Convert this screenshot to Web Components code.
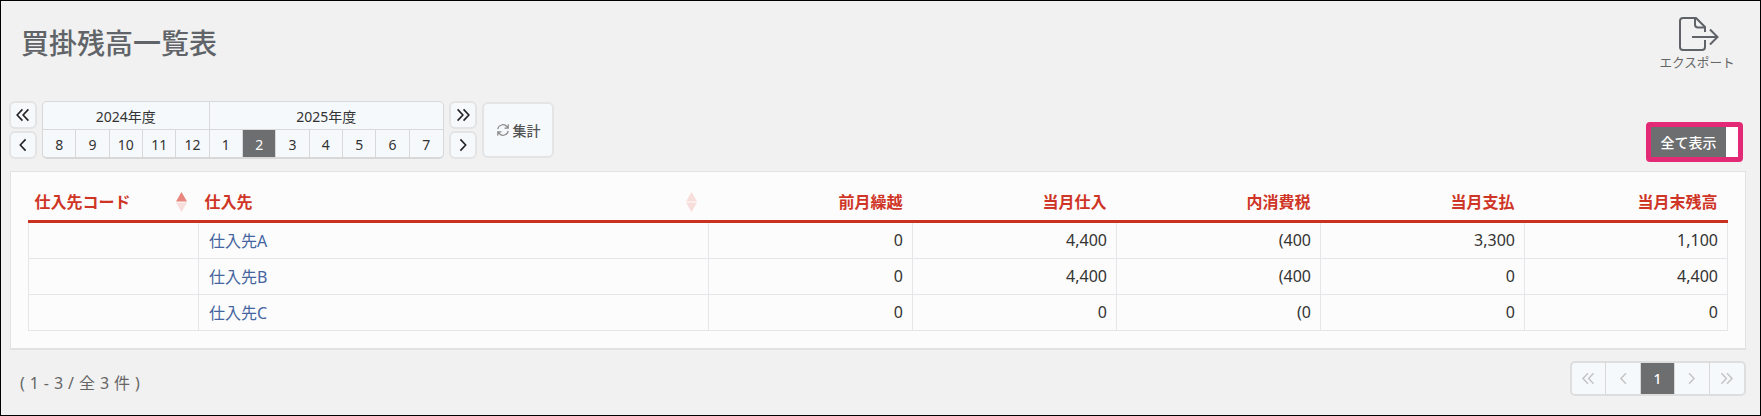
<!DOCTYPE html>
<html lang="ja">
<head>
<meta charset="utf-8">
<title>買掛残高一覧表</title>
<style>
  html, body { margin: 0; padding: 0; background: #f1f1f1; }
  body { font-family: "Noto Sans", "Noto Sans CJK JP", sans-serif; }
</style>
</head>
<body>
<ap-page>
  <ap-head slot="head" label="エクスポート">買掛残高一覧表</ap-head>
  <ap-calendar slot="calendar"></ap-calendar>
  <ap-show-all slot="action">全て表示</ap-show-all>
  <ap-balance-table slot="table"></ap-balance-table>
  <span slot="count">( 1 - 3 / 全 3 件 )</span>
  <ap-pager slot="pager"></ap-pager>
</ap-page>

<script>
(function () {
  const FONT = '"Noto Sans", "Noto Sans CJK JP", sans-serif';

  // shared chevrons, viewBox 0 0 16 16
  const ICONS = {
    first: '<path d="M7.5 3 2.8 8l4.7 5M12.8 3 8.1 8l4.7 5"/>',
    prev: '<path d="M10.3 3 5.6 8l4.7 5"/>',
    next: '<path d="M5.7 3l4.7 5-4.7 5"/>',
    last: '<path d="M3.2 3l4.7 5-4.7 5M8.5 3l4.7 5-4.7 5"/>'
  };

  function chevron(name, size, width) {
    return `<svg width="${size}" height="${size}" viewBox="0 0 16 16" fill="none" stroke="currentColor" stroke-width="${width}">${ICONS[name]}</svg>`;
  }

  class ApPage extends HTMLElement {
    constructor() {
      super();
      this.attachShadow({ mode: "open" });
      this.shadowRoot.innerHTML = `
        <style>
          :host {
            display: block;
            width: 1761px;
            height: 416px;
            box-sizing: border-box;
            border: 1px solid #000;
            background: #f1f1f1;
            overflow: hidden;
            font-family: ${FONT};
          }
          .tools {
            display: flex;
            justify-content: space-between;
            align-items: flex-end;
            padding: 0 17px 0 8px;
            margin-bottom: 12px;
          }
          .card {
            margin: 0 14px 0 9px;
            height: 179px;
            box-sizing: border-box;
            background: #fcfcfc;
            border: 1px solid #e2e2e2;
            border-bottom-width: 2px;
            padding: 14px 18px 0 17px;
          }
          .foot {
            display: flex;
            justify-content: space-between;
            align-items: flex-start;
            padding: 11px 14px 0 19px;
            font-size: 16px;
            color: #666;
          }
          ::slotted(span) {
            padding-top: 9px;
            letter-spacing: 0.4px;
          }
        </style>
        <slot name="head"></slot>
        <div class="tools">
          <slot name="calendar"></slot>
          <slot name="action"></slot>
        </div>
        <div class="card"><slot name="table"></slot></div>
        <div class="foot">
          <slot name="count"></slot>
          <slot name="pager"></slot>
        </div>
      `;
    }
  }

  class ApHead extends HTMLElement {
    constructor() {
      super();
      this.attachShadow({ mode: "open" });
      this.shadowRoot.innerHTML = `
        <style>
          :host {
            display: flex;
            justify-content: space-between;
            height: 100px;
            padding: 16px 24px 0 20px;
            box-sizing: border-box;
            color: #606468;
          }
          h1 {
            margin: 7px 0 0;
            font-size: 28px;
            line-height: 38px;
            font-weight: 500;
          }
          .export {
            display: flex;
            flex-direction: column;
            align-items: center;
            width: 78px;
            font-size: 12.6px;
            line-height: 18px;
            color: #666;
          }
          svg { display: block; margin: 0 0 3px 4px; }
        </style>
        <h1><slot></slot></h1>
        <div class="export">
          <svg width="40" height="34" viewBox="0 0 40 34" fill="none" stroke="#5f6368" stroke-width="2">
            <path d="M26 23v7a3 3 0 0 1-3 3H4a3 3 0 0 1-3-3V4a3 3 0 0 1 3-3h13l9 9v5"/>
            <path d="M16 1.500v6a3 3 0 0 0 3 3h7"/>
            <path d="M13 20h25M31 12.500 38.500 20 31 27.500"/>
          </svg>
          <span id="label"></span>
        </div>
      `;
    }

    connectedCallback() {
      this.shadowRoot.getElementById("label").textContent = this.getAttribute("label");
    }
  }

  class ApCalendar extends HTMLElement {
    constructor() {
      super();
      this.attachShadow({ mode: "open" });
      const months = [8, 9, 10, 11, 12, 1, 2, 3, 4, 5, 6, 7];
      const cells = months.map(m =>
        `<div class="m${m === 2 ? " on" : ""}">${m}</div>`).join("");
      this.shadowRoot.innerHTML = `
        <style>
          :host {
            display: flex;
            gap: 5px;
            font-size: 14px;
            color: #333;
          }
          .nav { display: grid; grid-template-rows: 28px 28px; gap: 2px; width: 28px; }
          button {
            padding: 0;
            margin: 0;
            font: inherit;
            color: #222;
            background: #f6f9fb;
            border: 2px solid #e4e4e4;
            border-radius: 6px;
            display: flex;
            align-items: center;
            justify-content: center;
          }
          .grid {
            width: 402px;
            height: 58px;
            box-sizing: border-box;
            display: grid;
            grid-template-columns: repeat(12, 1fr);
            grid-template-rows: 28px 28px;
            background: #f6f9fb;
            border: 1px solid #d8d8d8;
            border-bottom-width: 2px;
            border-radius: 5px;
            overflow: hidden;
          }
          .y, .m {
            display: flex;
            align-items: center;
            justify-content: center;
            box-sizing: border-box;
            border-right: 1px solid #d8d8d8;
          }
          .y { border-bottom: 1px solid #d8d8d8; }
          .y1 { grid-column: span 5; }
          .y2 { grid-column: span 7; border-right: 0; }
          .m:last-child { border-right: 0; }
          .m.on { background: #6c6e70; color: #fff; }
          .sum {
            width: 72px;
            height: 56px;
            margin-top: 1px;
            gap: 3px;
            font-weight: 500;
            color: #555;
          }
        </style>
        <div class="nav">
          <button>${chevron("first", 18, 1.4)}</button>
          <button>${chevron("prev", 18, 1.4)}</button>
        </div>
        <div class="grid">
          <div class="y y1">2024年度</div>
          <div class="y y2">2025年度</div>
          ${cells}
        </div>
        <div class="nav">
          <button>${chevron("last", 18, 1.4)}</button>
          <button>${chevron("next", 18, 1.4)}</button>
        </div>
        <button class="sum">
          <svg width="14" height="14" viewBox="0 0 16 16" fill="none" stroke="#8a8a8a" stroke-width="1.300">
            <path d="M2 7a6 6 0 0 1 10.400-3l1.600 1.800M14 1.500v4.300H9.700"/>
            <path d="M14 9a6 6 0 0 1-10.400 3L2 10.200M2 14.500v-4.300h4.300"/>
          </svg>
          集計
        </button>
      `;
    }
  }

  class ApShowAll extends HTMLElement {
    constructor() {
      super();
      this.attachShadow({ mode: "open" });
      this.shadowRoot.innerHTML = `
        <style>
          :host {
            display: flex;
            width: 97px;
            height: 40px;
            box-sizing: border-box;
            border: 5px solid #e32a77;
            border-radius: 4px;
            background: #fff;
            margin-bottom: -3px;
          }
          div {
            width: 75px;
            display: flex;
            align-items: center;
            justify-content: center;
            background: #6c6e70;
            color: #fff;
            font-size: 14px;
            font-weight: 500;
          }
        </style>
        <div><slot></slot></div>
      `;
    }
  }

  class ApBalanceTable extends HTMLElement {
    constructor() {
      super();
      this.attachShadow({ mode: "open" });
      const rows = [
        ["", "仕入先A", "0", "4,400", "(400", "3,300", "1,100"],
        ["", "仕入先B", "0", "4,400", "(400", "0", "4,400"],
        ["", "仕入先C", "0", "0", "(0", "0", "0"]
      ];
      const body = rows.map(r => "<tr>" + r.map((v, i) =>
        i === 1 ? `<td class="l"><a>${v}</a></td>` : `<td>${v}</td>`).join("") + "</tr>").join("");
      const sort = (up, down) => `
        <svg class="sort" width="11" height="20" viewBox="0 0 11 20">
          <path d="M5.500 0 11 9.500H0z" fill="${up}"/>
          <path d="M5.500 20 11 10.500H0z" fill="${down}"/>
        </svg>`;
      this.shadowRoot.innerHTML = `
        <style>
          :host { display: block; }
          table {
            width: 100%;
            table-layout: fixed;
            border-collapse: collapse;
            font-size: 16px;
            color: #333;
          }
          th {
            height: 35px;
            padding: 0 10px 4px 6px;
            box-sizing: border-box;
            text-align: right;
            font-size: 16px;
            font-weight: 700;
            color: #cf3526;
            border-bottom: 3px solid #c93120;
            position: relative;
          }
          th.l { text-align: left; }
          td {
            height: 36px;
            padding: 0 9px 0 6px;
            box-sizing: border-box;
            text-align: right;
            border: 1px solid #e4e6ea;
          }
          tr:first-child td { height: 37px; }
          td.l { text-align: left; padding-left: 10px; }
          a { color: #4565a0; }
          .sort { position: absolute; right: 12px; top: 6px; }
        </style>
        <table>
          <colgroup>
            <col style="width:170px"><col style="width:510px"><col style="width:204px">
            <col style="width:204px"><col style="width:204px"><col style="width:204px"><col style="width:203px">
          </colgroup>
          <thead>
            <tr>
              <th class="l">仕入先コード${sort("#e8857c", "#f8dedb")}</th>
              <th class="l">仕入先${sort("#f8dedb", "#f8dedb")}</th>
              <th>前月繰越</th>
              <th>当月仕入</th>
              <th>内消費税</th>
              <th>当月支払</th>
              <th>当月末残高</th>
            </tr>
          </thead>
          <tbody>${body}</tbody>
        </table>
      `;
    }
  }

  class ApPager extends HTMLElement {
    constructor() {
      super();
      this.attachShadow({ mode: "open" });
      this.shadowRoot.innerHTML = `
        <style>
          :host {
            display: grid;
            grid-template-columns: repeat(5, 1fr);
            width: 176px;
            height: 35px;
            box-sizing: border-box;
            background: #f6f9fb;
            border: 2px solid #dedede;
            border-radius: 5px;
            overflow: hidden;
            color: #c4c4c4;
          }
          div {
            display: flex;
            align-items: center;
            justify-content: center;
            border-right: 1px solid #d8d8d8;
            font-size: 14px;
            font-weight: 500;
          }
          div:last-child { border-right: 0; }
          .on { background: #6c6e70; color: #fff; }
        </style>
        <div>${chevron("first", 17, 1.4)}</div>
        <div>${chevron("prev", 17, 1.4)}</div>
        <div class="on">1</div>
        <div>${chevron("next", 17, 1.4)}</div>
        <div>${chevron("last", 17, 1.4)}</div>
      `;
    }
  }

  customElements.define("ap-page", ApPage);
  customElements.define("ap-head", ApHead);
  customElements.define("ap-calendar", ApCalendar);
  customElements.define("ap-show-all", ApShowAll);
  customElements.define("ap-balance-table", ApBalanceTable);
  customElements.define("ap-pager", ApPager);
})();
</script>
</body>
</html>
